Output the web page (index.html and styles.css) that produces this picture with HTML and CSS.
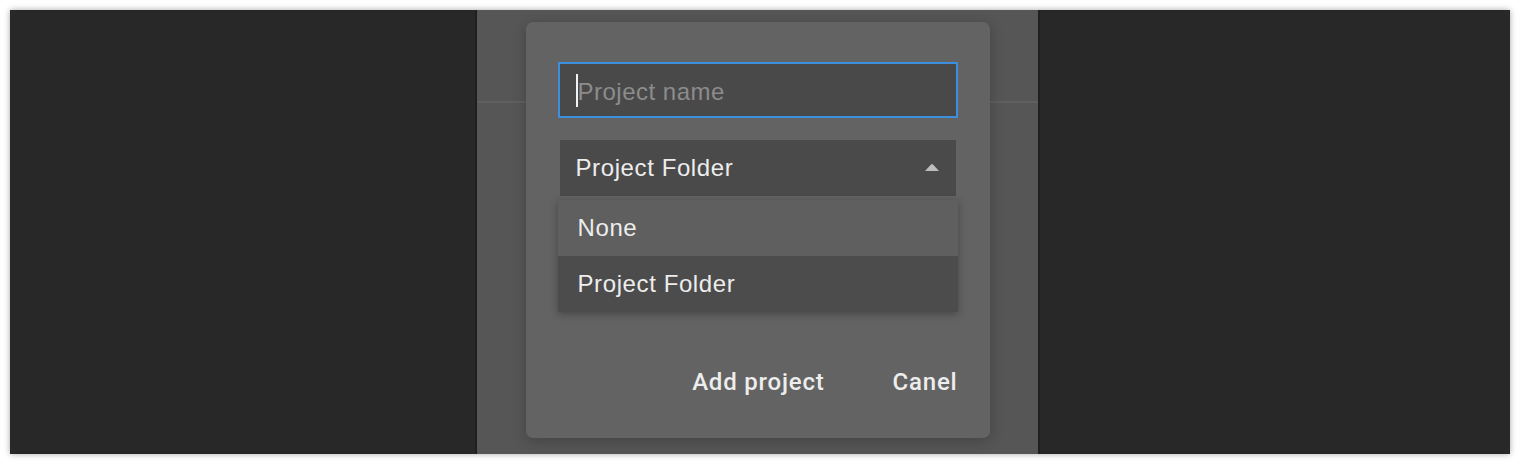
FILE: index.html
```html
<!DOCTYPE html>
<html>
<head>
<meta charset="utf-8">
<link rel="stylesheet" href="styles.css">
</head>
<body>
<div class="window">
  <div class="column">
    <div class="column-header"></div>
    <div class="dialog">
      <div class="field">
        <span class="caret"></span>
        <span class="placeholder">Project name</span>
      </div>
      <div class="select-wrap">
        <div class="select">
          <span>Project Folder</span>
          <svg class="arrow" width="16" height="8" viewBox="0 0 16 8"><path d="M1 8 L7 1.5 Q8 0.5 9 1.5 L15 8 Z" fill="#bdbdbd"/></svg>
        </div>
        <div class="menu">
          <div class="item">None</div>
          <div class="item selected">Project Folder</div>
        </div>
      </div>
      <div class="actions">
        <button class="btn">Add project</button>
        <button class="btn">Canel</button>
      </div>
    </div>
  </div>
</div>
</body>
</html>
```

FILE: styles.css
```css
html, body {
  margin: 0;
  padding: 0;
  background: #ffffff;
}
body {
  padding: 10px;
  font-family: "Liberation Sans", Arial, sans-serif;
}
.window {
  width: 1500px;
  height: 444px;
  background: #282828;
  box-shadow: 0 0 6px rgba(0, 0, 0, 0.35);
  display: flex;
  padding-left: 467px;
  box-sizing: border-box;
  overflow: hidden;
}
.column {
  width: 561px;
  height: 100%;
  background: #565656;
  box-shadow: -2px 0 0 #1f1f1f, 2px 0 0 #1f1f1f;
  position: relative;
  display: flex;
  flex-direction: column;
  align-items: center;
}
.column-header {
  position: absolute;
  left: 0;
  right: 0;
  top: 91px;
  height: 2px;
  background: #5f5f5f;
}
.dialog {
  position: relative;
  margin-top: 12px;
  width: 464px;
  height: 416px;
  box-sizing: border-box;
  padding: 40px 32px 32px;
  background: #636363;
  border-radius: 7px;
  box-shadow: 0 3px 14px rgba(0, 0, 0, 0.22);
  display: flex;
  flex-direction: column;
}
.field {
  height: 56px;
  box-sizing: border-box;
  border: 2px solid #3b8fdd;
  background: #494949;
  display: flex;
  align-items: center;
  padding-left: 16px;
  position: relative;
}
.caret {
  width: 2px;
  height: 33px;
  margin-top: 1px;
  background: #f2f2f2;
}
.placeholder {
  font-size: 24px;
  color: #8c8c8c;
  letter-spacing: 0.5px;
  padding-top: 3px;
}
.select-wrap {
  position: relative;
  margin: 22px 2px 0;
}
.select {
  height: 56px;
  background: #4a4a4a;
  display: flex;
  align-items: center;
  justify-content: space-between;
  padding: 0 16px;
  font-size: 24px;
  color: #ededed;
  letter-spacing: 0.6px;
}
.arrow {
  margin-top: -2px;
}
.menu {
  position: absolute;
  left: -2px;
  right: -2px;
  top: 60px;
  box-shadow: 0 2px 8px rgba(0, 0, 0, 0.3);
  z-index: 2;
}
.item {
  height: 56px;
  display: flex;
  align-items: center;
  padding-left: 20px;
  font-size: 24px;
  color: #ededed;
  letter-spacing: 0.6px;
  background: #5f5f5f;
}
.item.selected {
  background: #4c4c4c;
}
.actions {
  margin-top: auto;
  display: flex;
  justify-content: flex-end;
  gap: 68px;
  align-items: center;
}
.btn {
  background: none;
  border: none;
  padding: 0;
  height: 48px;
  font-family: Roboto, "Liberation Sans", sans-serif;
  font-size: 24px;
  font-weight: 500;
  color: #ededed;
  letter-spacing: 0.8px;
}
```
